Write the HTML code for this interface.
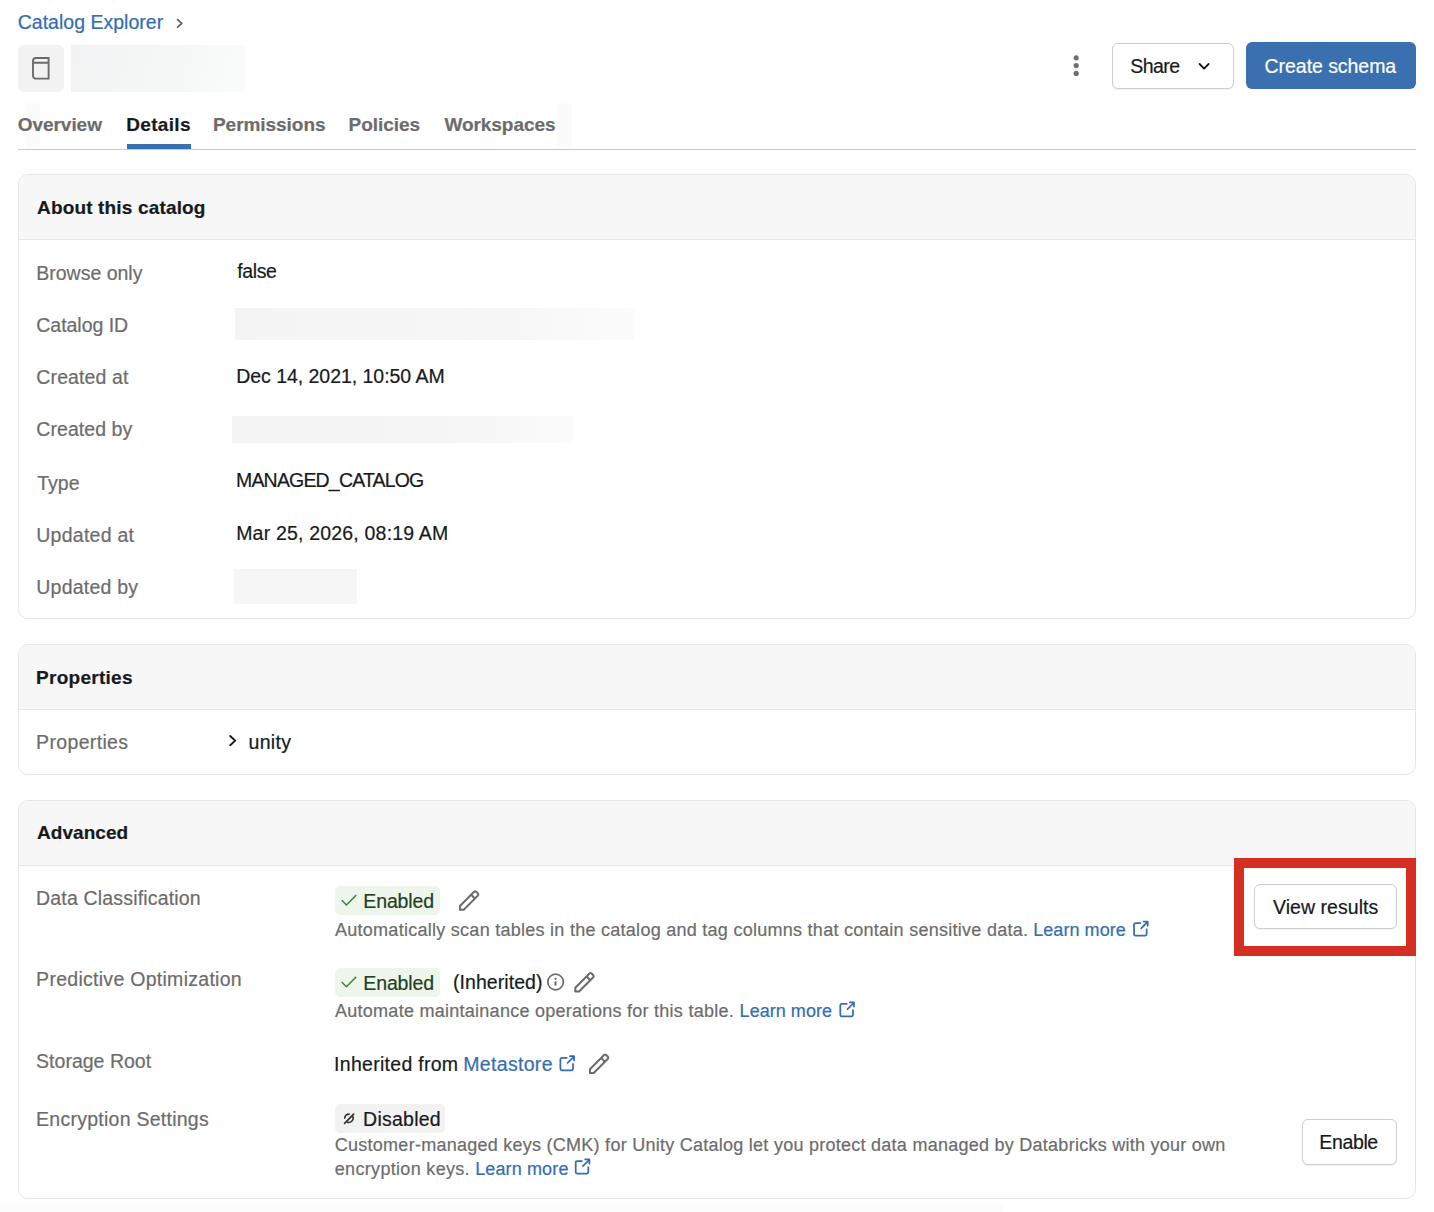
<!DOCTYPE html>
<html><head><meta charset="utf-8"><style>
html,body{margin:0;padding:0;background:#fff;width:1434px;height:1212px;overflow:hidden;position:relative}
.t{position:absolute;white-space:nowrap;line-height:1;font-family:"Liberation Sans",sans-serif;font-weight:400;-webkit-text-stroke:0.2px currentColor}
</style></head><body>
<div style="position:absolute;left:18px;top:173.5px;width:1398px;height:445.5px;box-sizing:border-box;border:1px solid #e6e6e6;border-radius:10px;background:#fff;overflow:hidden"></div><div style="position:absolute;left:19px;top:174.5px;width:1396px;height:65.5px;background:#f7f7f7;border-top-left-radius:9px;border-top-right-radius:9px;border-bottom:1px solid #e6e6e6;box-sizing:border-box"></div><div style="position:absolute;left:18px;top:643.5px;width:1398px;height:131.0px;box-sizing:border-box;border:1px solid #e6e6e6;border-radius:10px;background:#fff;overflow:hidden"></div><div style="position:absolute;left:19px;top:644.5px;width:1396px;height:65.5px;background:#f7f7f7;border-top-left-radius:9px;border-top-right-radius:9px;border-bottom:1px solid #e6e6e6;box-sizing:border-box"></div><div style="position:absolute;left:18px;top:799.5px;width:1398px;height:399.0px;box-sizing:border-box;border:1px solid #e6e6e6;border-radius:10px;background:#fff;overflow:hidden"></div><div style="position:absolute;left:19px;top:800.5px;width:1396px;height:65.0px;background:#f7f7f7;border-top-left-radius:9px;border-top-right-radius:9px;border-bottom:1px solid #e6e6e6;box-sizing:border-box"></div><div style="position:absolute;left:18px;top:45px;width:46px;height:47px;background:#f2f2f2;border-radius:6px"></div><div style="position:absolute;left:71px;top:45px;width:174px;height:47px;background:linear-gradient(110deg,#f1f2f3 0%,#f4f5f5 40%,#fafbfb 100%)"></div><div style="position:absolute;left:234.7px;top:308.3px;width:399.3px;height:32.19999999999999px;background:linear-gradient(90deg,#f4f4f4,#f6f6f6 60%,#fbfbfb)"></div><div style="position:absolute;left:232.3px;top:415.7px;width:340.59999999999997px;height:27.600000000000023px;background:linear-gradient(90deg,#f3f3f3,#f5f5f5 60%,#fbfbfb)"></div><div style="position:absolute;left:234.3px;top:569px;width:122.59999999999997px;height:34.700000000000045px;background:#f6f6f6"></div><div style="position:absolute;left:1111.5px;top:42.5px;width:122.5px;height:46.0px;box-sizing:border-box;border:1px solid #cdcdcd;border-radius:6px;background:#fff;box-shadow:0 1px 1px rgba(0,0,0,0.06)"></div><div style="position:absolute;left:1246px;top:42px;width:170px;height:46.5px;background:#3a70b0;border-radius:6px"></div><div style="position:absolute;left:26px;top:103px;width:14px;height:44px;background:#fbfbfb"></div><div style="position:absolute;left:557.3px;top:103px;width:14.400000000000091px;height:43.5px;background:#fbfbfb"></div><div style="position:absolute;left:18px;top:148.6px;width:1398px;height:1.3000000000000114px;background:#cacaca"></div><div style="position:absolute;left:0px;top:1203.7px;width:1003px;height:8.299999999999955px;background:#fcfcfc"></div><div style="position:absolute;left:127px;top:144px;width:63.599999999999994px;height:4.5px;background:#3a70b0"></div><div style="position:absolute;left:335px;top:886px;width:105px;height:29px;background:#eef6eb;border-radius:5px"></div><div style="position:absolute;left:335px;top:968px;width:105px;height:28.5px;background:#eef6eb;border-radius:5px"></div><div style="position:absolute;left:335px;top:1104.3px;width:110.39999999999998px;height:28.299999999999955px;background:#f2f2f2;border-radius:5px"></div><div style="position:absolute;left:1253.5px;top:883.5px;width:143.5px;height:45.5px;box-sizing:border-box;border:1px solid #cdcdcd;border-radius:6px;background:#fff;box-shadow:0 1px 1px rgba(0,0,0,0.06)"></div><div style="position:absolute;left:1301.5px;top:1119px;width:95.5px;height:45.5px;box-sizing:border-box;border:1px solid #cdcdcd;border-radius:6px;background:#fff;box-shadow:0 1px 1px rgba(0,0,0,0.06)"></div><div style="position:absolute;left:1234px;top:858px;width:182px;height:98px;box-sizing:border-box;border:10px solid #d42f22"></div><svg width="1434" height="1212" viewBox="0 0 1434 1212" style="position:absolute;left:0;top:0" fill="none" stroke-linecap="round" stroke-linejoin="round">
<path d="M177.6 19.6 L181.8 23.4 L177.6 27.2" stroke="#5f5f5f" stroke-width="1.7"/>
<path d="M36 58 H48.6 V78.6 H36.5 A3 3 0 0 1 33 75.6 V61 A3 3 0 0 1 36 58 Z M33 62.8 H48.6" stroke="#6a6a6a" stroke-width="1.9" stroke-linejoin="miter" stroke-linecap="butt"/>
<circle cx="1076.2" cy="57.8" r="2.6" fill="#707070" stroke="none"/>
<circle cx="1076.2" cy="65.6" r="2.6" fill="#707070" stroke="none"/>
<circle cx="1076.2" cy="73.4" r="2.6" fill="#707070" stroke="none"/>
<path d="M1199.6 64 L1204.1 68.6 L1208.6 64" stroke="#161616" stroke-width="1.8"/>
<path d="M230.2 736 L235.2 740.6 L230.2 745.2" stroke="#161616" stroke-width="1.9"/>
<path d="M342.1 900.6 L346.4 905 L355.8 895.4" stroke="#3b7e40" stroke-width="1.5"/>
<path d="M342.1 982.4 L346.4 986.8 L355.8 977.2" stroke="#3b7e40" stroke-width="1.5"/>
<g transform="translate(0.00 0.00)"><path d="M459.93 905.97 V909.8 H463.7 L477.89 895.61 A1.5 1.5 0 0 0 477.89 893.49 L476.21 891.81 A1.5 1.5 0 0 0 474.09 891.81 Z M471.15 894.75 L474.95 898.55" stroke="#6a6a6a" stroke-width="2"/></g><g transform="translate(115.39 81.70)"><path d="M459.93 905.97 V909.8 H463.7 L477.89 895.61 A1.5 1.5 0 0 0 477.89 893.49 L476.21 891.81 A1.5 1.5 0 0 0 474.09 891.81 Z M471.15 894.75 L474.95 898.55" stroke="#6a6a6a" stroke-width="2"/></g><g transform="translate(130.01 163.20)"><path d="M459.93 905.97 V909.8 H463.7 L477.89 895.61 A1.5 1.5 0 0 0 477.89 893.49 L476.21 891.81 A1.5 1.5 0 0 0 474.09 891.81 Z M471.15 894.75 L474.95 898.55" stroke="#6a6a6a" stroke-width="2"/></g><g transform="translate(1134.03 921.53)"><path d="M6.3 1.62 H1.5 A1.5 1.5 0 0 0 0 3.12 V12.6 A1.5 1.5 0 0 0 1.5 14.1 H11.13 A1.5 1.5 0 0 0 12.63 12.6 V7.8 M7.2 6.8 L13.3 0.7 M9.5 0 H13.7 V4.3" stroke="#336db2" stroke-width="1.75"/></g><g transform="translate(840.30 1002.30)"><path d="M6.3 1.62 H1.5 A1.5 1.5 0 0 0 0 3.12 V12.6 A1.5 1.5 0 0 0 1.5 14.1 H11.13 A1.5 1.5 0 0 0 12.63 12.6 V7.8 M7.2 6.8 L13.3 0.7 M9.5 0 H13.7 V4.3" stroke="#336db2" stroke-width="1.75"/></g><g transform="translate(560.40 1056.20)"><path d="M6.3 1.62 H1.5 A1.5 1.5 0 0 0 0 3.12 V12.6 A1.5 1.5 0 0 0 1.5 14.1 H11.13 A1.5 1.5 0 0 0 12.63 12.6 V7.8 M7.2 6.8 L13.3 0.7 M9.5 0 H13.7 V4.3" stroke="#336db2" stroke-width="1.75"/></g><g transform="translate(575.70 1159.40)"><path d="M6.3 1.62 H1.5 A1.5 1.5 0 0 0 0 3.12 V12.6 A1.5 1.5 0 0 0 1.5 14.1 H11.13 A1.5 1.5 0 0 0 12.63 12.6 V7.8 M7.2 6.8 L13.3 0.7 M9.5 0 H13.7 V4.3" stroke="#336db2" stroke-width="1.75"/></g><circle cx="555.6" cy="982.0" r="7.8" stroke="#6a6a6a" stroke-width="1.7"/><circle cx="555.5" cy="978.8" r="1.15" fill="#6a6a6a" stroke="none"/><path d="M555.5 982.3 V984.8" stroke="#6a6a6a" stroke-width="2"/><path d="M344.6 1123.4 L353.6 1114.2" stroke="#333" stroke-width="1.7"/><path d="M344.7 1118.2 A4.6 4.6 0 0 1 349.2 1114.1" stroke="#333" stroke-width="1.6"/><path d="M352.8 1116.2 A4.6 4.6 0 0 1 347.2 1122.3" stroke="#333" stroke-width="1.6"/></svg>
<div class="t" id="bc" style="left:17.70px;top:13.00px;font-size:19.5px;color:#336db2;letter-spacing:0.017px;">Catalog Explorer</div><div class="t" id="share" style="left:1130.20px;top:57.00px;font-size:19.5px;color:#161a1d;letter-spacing:-0.512px;">Share</div><div class="t" id="create" style="left:1264.60px;top:57.00px;font-size:19.5px;color:#ffffff;letter-spacing:-0.054px;">Create schema</div><div class="t" id="tab1" style="left:17.70px;top:115.00px;font-size:19px;font-weight:700;color:#6c6c6c;letter-spacing:-0.036px;">Overview</div><div class="t" id="tab2" style="left:126.30px;top:115.00px;font-size:19px;font-weight:700;color:#161a1d;letter-spacing:0.317px;">Details</div><div class="t" id="tab3" style="left:213.00px;top:115.00px;font-size:19px;font-weight:700;color:#6c6c6c;letter-spacing:-0.050px;">Permissions</div><div class="t" id="tab4" style="left:348.50px;top:115.00px;font-size:19px;font-weight:700;color:#6c6c6c;letter-spacing:-0.043px;">Policies</div><div class="t" id="tab5" style="left:444.40px;top:115.00px;font-size:19px;font-weight:700;color:#6c6c6c;letter-spacing:-0.056px;">Workspaces</div><div class="t" id="h1" style="left:37.00px;top:198.00px;font-size:19px;font-weight:700;color:#161a1d;letter-spacing:0.162px;">About this catalog</div><div class="t" id="l0" style="left:36.30px;top:264.00px;font-size:19.5px;color:#6c6c6c;letter-spacing:-0.010px;">Browse only</div><div class="t" id="l1" style="left:36.30px;top:316.00px;font-size:19.5px;color:#6c6c6c;letter-spacing:-0.028px;">Catalog ID</div><div class="t" id="l2" style="left:36.30px;top:368.00px;font-size:19.5px;color:#6c6c6c;letter-spacing:0.128px;">Created at</div><div class="t" id="l3" style="left:36.30px;top:420.00px;font-size:19.5px;color:#6c6c6c;letter-spacing:0.067px;">Created by</div><div class="t" id="l4" style="left:37.30px;top:474.00px;font-size:19.5px;color:#6c6c6c;letter-spacing:-0.033px;">Type</div><div class="t" id="l5" style="left:36.30px;top:526.00px;font-size:19.5px;color:#6c6c6c;letter-spacing:0.244px;">Updated at</div><div class="t" id="l6" style="left:36.30px;top:578.00px;font-size:19.5px;color:#6c6c6c;letter-spacing:0.228px;">Updated by</div><div class="t" id="v0" style="left:237.20px;top:262.00px;font-size:19.5px;color:#161a1d;letter-spacing:-0.375px;">false</div><div class="t" id="v2" style="left:236.20px;top:367.00px;font-size:19.5px;color:#161a1d;letter-spacing:-0.036px;">Dec 14, 2021, 10:50 AM</div><div class="t" id="v4" style="left:236.00px;top:471.00px;font-size:19.5px;color:#161a1d;letter-spacing:-0.818px;">MANAGED_CATALOG</div><div class="t" id="v5" style="left:236.20px;top:524.00px;font-size:19.5px;color:#161a1d;letter-spacing:0.188px;">Mar 25, 2026, 08:19 AM</div><div class="t" id="h2" style="left:36.10px;top:668.00px;font-size:19px;font-weight:700;color:#161a1d;letter-spacing:0.267px;">Properties</div><div class="t" id="l7" style="left:36.10px;top:733.00px;font-size:19.5px;color:#6c6c6c;letter-spacing:0.344px;">Properties</div><div class="t" id="v7" style="left:248.50px;top:733.00px;font-size:19.5px;color:#161a1d;letter-spacing:0.338px;">unity</div><div class="t" id="h3" style="left:37.10px;top:823.00px;font-size:19px;font-weight:700;color:#161a1d;letter-spacing:0.029px;">Advanced</div><div class="t" id="l8" style="left:36.10px;top:889.00px;font-size:19.5px;color:#6c6c6c;letter-spacing:0.167px;">Data Classification</div><div class="t" id="l9" style="left:36.10px;top:970.00px;font-size:19.5px;color:#6c6c6c;letter-spacing:0.282px;">Predictive Optimization</div><div class="t" id="l10" style="left:36.10px;top:1052.00px;font-size:19.5px;color:#6c6c6c;letter-spacing:0.009px;">Storage Root</div><div class="t" id="l11" style="left:36.10px;top:1110.00px;font-size:19.5px;color:#6c6c6c;letter-spacing:0.256px;">Encryption Settings</div><div class="t" id="en1" style="left:363.30px;top:892.00px;font-size:19.5px;color:#233f26;letter-spacing:-0.125px;">Enabled</div><div class="t" id="d1" style="left:335.00px;top:921.00px;font-size:18px;color:#6c6c6c;letter-spacing:0.269px;">Automatically scan tables in the catalog and tag columns that contain sensitive data.</div><div class="t" id="lm1" style="left:1033.20px;top:921.00px;font-size:18px;color:#336db2;letter-spacing:0.061px;">Learn more</div><div class="t" id="en2" style="left:363.30px;top:974.00px;font-size:19.5px;color:#233f26;letter-spacing:-0.125px;">Enabled</div><div class="t" id="inh" style="left:453.00px;top:973.00px;font-size:19.5px;color:#161a1d;letter-spacing:0.060px;">(Inherited)</div><div class="t" id="d2" style="left:335.00px;top:1002.00px;font-size:18px;color:#6c6c6c;letter-spacing:0.267px;">Automate maintainance operations for this table.</div><div class="t" id="lm2" style="left:739.60px;top:1002.00px;font-size:18px;color:#336db2;letter-spacing:0.039px;">Learn more</div><div class="t" id="sr1" style="left:334.10px;top:1055.00px;font-size:19.5px;color:#161a1d;letter-spacing:0.285px;">Inherited from</div><div class="t" id="sr2" style="left:463.30px;top:1055.00px;font-size:19.5px;color:#336db2;letter-spacing:0.312px;">Metastore</div><div class="t" id="dis" style="left:363.10px;top:1110.00px;font-size:19.5px;color:#161a1d;letter-spacing:0.243px;">Disabled</div><div class="t" id="d3a" style="left:334.80px;top:1136.00px;font-size:18px;color:#6c6c6c;letter-spacing:0.259px;">Customer-managed keys (CMK) for Unity Catalog let you protect data managed by Databricks with your own</div><div class="t" id="d3b" style="left:334.80px;top:1160.00px;font-size:18px;color:#6c6c6c;letter-spacing:0.317px;">encryption keys.</div><div class="t" id="lm3" style="left:475.20px;top:1160.00px;font-size:18px;color:#336db2;letter-spacing:0.128px;">Learn more</div><div class="t" id="vr" style="left:1273.00px;top:898.00px;font-size:19.5px;color:#161a1d;letter-spacing:0.041px;">View results</div><div class="t" id="enb" style="left:1319.30px;top:1133.00px;font-size:19.5px;color:#161a1d;letter-spacing:-0.360px;">Enable</div>
</body></html>
